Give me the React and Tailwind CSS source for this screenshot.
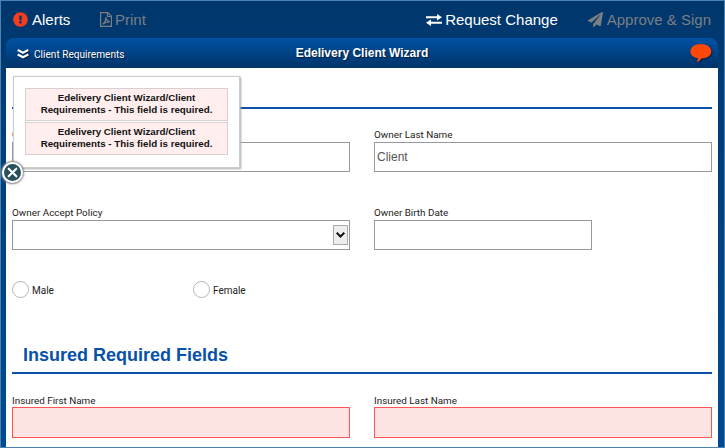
import { FaExclamationCircle, FaRegFilePdf, FaPaperPlane } from 'react-icons/fa';

function Label({ children, low }) {
  return (
    <div
      className={
        "h-4 font-['Roboto',sans-serif] text-[9.9px] leading-4 whitespace-nowrap text-[#222] " + (low ? 'pt-0.5' : 'pt-px')
      }
    >
      {children}
    </div>
  );
}

function Field({ label, value, error, narrow, children }) {
  return (
    <div className="w-[338px]">
      <Label low={error}>{label}</Label>
      <div
        className={
          'flex items-center border pr-px pl-0.5 text-xs text-[#555] ' +
          (narrow ? 'w-[218px] ' : 'w-full ') +
          (error ? 'h-[31px] border-[#f55] bg-[#ffe4e4]' : 'mb-px h-[30px] border-[#999] bg-white')
        }
      >
        {value && <span>{value}</span>}
        {children}
      </div>
    </div>
  );
}

function Radio({ label }) {
  return (
    <div className="flex w-[181px] items-center gap-[3px]">
      <span className="size-[17px] rounded-full border border-[#b5b5b5]" />
      <span className="pt-[3px] font-['Roboto',sans-serif] text-[10px] leading-4 text-[#222]">{label}</span>
    </div>
  );
}

function Alert() {
  return (
    <div className="flex h-[33px] w-[203px] items-center justify-center border border-[#d8d0d0] bg-[#ffeeed] text-center text-[9.75px] leading-3 font-bold text-[#111]">
      <p className="-mt-px whitespace-nowrap">
        Edelivery Client Wizard/Client
        <br />
        Requirements - This field is required.
      </p>
    </div>
  );
}

export default function App() {
  return (
    <div className="relative h-[448px] w-[725px] overflow-hidden border border-[#4a82b0] bg-linear-to-b from-[#00366b] via-[#003c77] via-20% to-[#004a92] font-['Liberation_Sans',Arial,sans-serif]">
      <header className="flex h-[37px] items-center text-[15px] leading-5 whitespace-nowrap text-white">
        <div className="flex w-[86px] items-center gap-1 pl-3">
          <FaExclamationCircle className="size-[15px] shrink-0 text-[#f83c1e]" />
          <span>Alerts</span>
        </div>
        <div className="ml-[13px] flex items-center gap-[3px] text-[#7b7f84]">
          <svg viewBox="0 0 12 15" className="h-[15px] w-3" fill="none" stroke="currentColor" strokeWidth="1.200">
            <path d="M.6.6h7.200l3.600 3.600v10.200H.6zM7.500.8v3.700h3.700" />
            <path d="M2.700 12.200C4.500 10.800 6 8 5.600 5.300c1 3 1.800 4.300 4.100 4.600-2.300-.3-4.600.3-7 2.300z" />
          </svg>
          <span>Print</span>
        </div>
        <div className="ml-auto flex items-center gap-[3px]">
          <svg viewBox="0 0 16 12" className="h-3 w-4" fill="currentColor">
            <path d="M0 2.2h11V0l5 3.3-5 3.3V4.3H0zM16 7.7v2.1H5V12L0 8.7l5-3.3v2.3z" />
          </svg>
          <span>Request Change</span>
        </div>
        <div className="mr-[13px] ml-[30px] flex items-center gap-1 text-[#7b7f84]">
          <FaPaperPlane className="size-[15px]" />
          <span>Approve &amp; Sign</span>
        </div>
      </header>

      <main className="ml-[5px] w-[712px]">
        <div className="grid h-[30px] grid-cols-[1fr_auto_1fr] items-center rounded-t-lg bg-linear-to-b from-[#0052a5] to-[#003468] text-white">
          <div className="flex items-center gap-[5px] pt-0.5 pl-[11px]">
            <svg viewBox="0 0 12 10" className="h-2.5 w-3 drop-shadow-[1px_1px_0_#001d40]" fill="none" stroke="currentColor" strokeWidth="2.1">
              <path d="M.7 1 6 3.8 11.3 1M.7 5.5 6 8.3l5.3-2.8" />
            </svg>
            <span className="pt-px font-['Roboto',sans-serif] text-[10.1px] leading-4 [text-shadow:1px_1px_1px_#001d40]">
              Client Requirements
            </span>
          </div>
          <h1 className="text-xs leading-4 font-bold [text-shadow:1px_1px_1px_#001d40]">Edelivery Client Wizard</h1>
          <svg viewBox="0 0 22 19" className="mr-[6px] h-[19px] w-[22px] justify-self-end drop-shadow-[1px_1px_1px_#001d40]" fill="#fd480b">
            <path d="M10.800 0C4.800 0 .4 3.100.4 7.400c0 3.400 2.900 6 7.500 6.900-.1 1.400-.5 2.500-1.400 3.600 2.200-.6 3.800-1.700 4.900-3.500 5.700-.2 9.900-2.900 9.900-7C21.300 3.100 16.800 0 10.800 0z" />
          </svg>
        </div>

        <div className="h-[379px] bg-white px-1.5">
          <div className="h-[41px] border-b-2 border-[#0b51a8]" />
          <div className="flex gap-6 pt-[17px]">
            <Field label="Owner First Name" />
            <Field label="Owner Last Name" value="Client" />
          </div>
          <div className="flex gap-6 pt-[31px]">
            <Field label="Owner Accept Policy">
              <span className="ml-auto flex h-5 w-[15px] items-center justify-center border border-[#aaa] bg-[#eee]">
                <svg viewBox="0 0 9 6" className="h-1.5 w-[9px] shrink-0" fill="none" stroke="#111" strokeWidth="2">
                  <path d="m.7.8 3.800 3.700L8.300.8" />
                </svg>
              </span>
            </Field>
            <Field label="Owner Birth Date" narrow />
          </div>
          <div className="flex pt-[29px]">
            <Radio label="Male" />
            <Radio label="Female" />
          </div>
          <h2 className="mt-[42px] h-[33px] border-b-2 border-[#0b51a8] pl-[11px] text-lg leading-[28px] font-bold text-[#0751a8]">
            Insured Required Fields
          </h2>
          <div className="flex gap-6 pt-[17px]">
            <Field label="Insured First Name" error />
            <Field label="Insured Last Name" error />
          </div>
        </div>
      </main>

      <aside className="absolute top-[75px] left-3 flex h-[92px] w-[227px] flex-col items-center gap-px border border-[#ccc] bg-white pt-[11px] shadow-[1px_1px_2px_#aaa]">
        <Alert />
        <Alert />
        <button aria-label="Close" className="absolute -bottom-[16px] -left-[12px] flex size-[21px] items-center justify-center rounded-full border-2 border-white bg-[#28505b] shadow-[0_0_2px_1px_#888]">
          <svg viewBox="0 0 10 10" className="size-[11px] shrink-0" stroke="white" strokeWidth="1.900" strokeLinecap="round">
            <path d="m1.500 1.500 7 7m0-7-7 7" />
          </svg>
        </button>
      </aside>
    </div>
  );
}
